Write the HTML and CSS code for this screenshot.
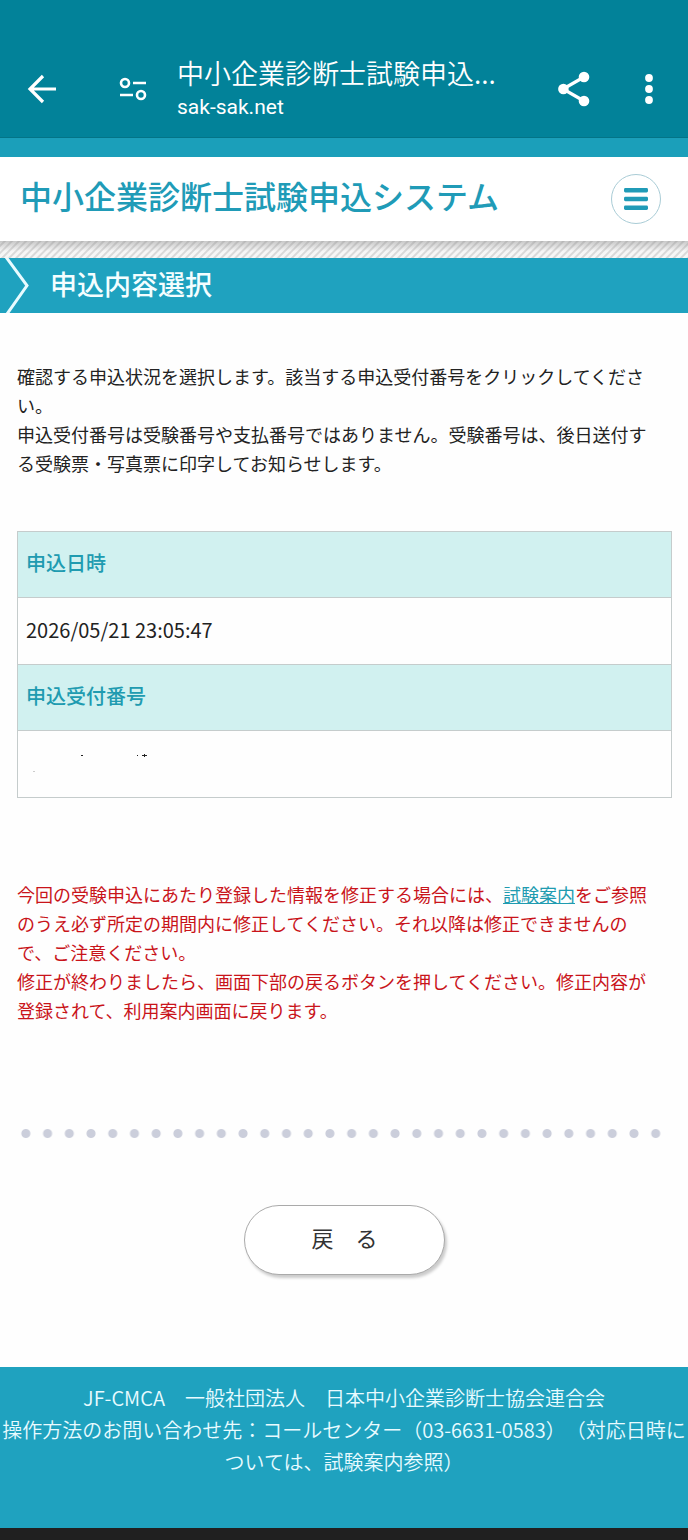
FILE: index.html
```html
<!DOCTYPE html>
<html lang="ja">
<head>
	<meta charset="UTF-8">
	<meta name="viewport" content="width=device-width, initial-scale=1.0">
	<title>中小企業診断士試験申込システム</title>
	<link rel="stylesheet" href="styles.css">
</head>
<body>

	<div class="browser-bar">
		<button type="button" class="bar-button" aria-label="戻る">
			<svg width="30" height="30" viewBox="0 0 30 30" fill="none" stroke="currentColor" stroke-width="3.2">
				<path d="M29 15H3M16 2L3 15l13 13"/>
			</svg>
		</button>
		<button type="button" class="bar-button bar-site" aria-label="サイト情報">
			<svg width="28" height="24" viewBox="0 0 28 24" fill="none" stroke="currentColor" stroke-width="2.6">
				<circle cx="6" cy="6" r="4"/>
				<path d="M14 6h13M1 18h13"/>
				<circle cx="22" cy="18" r="4"/>
			</svg>
		</button>
		<div class="bar-text">
			<div class="bar-title">中小企業診断士試験申込...</div>
			<div class="bar-url">sak-sak.net</div>
		</div>
		<button type="button" class="bar-button" aria-label="共有">
			<svg width="34" height="36" viewBox="0 0 34 36" fill="currentColor">
				<path d="M26 6L5 18l21 12" fill="none" stroke="currentColor" stroke-width="3.2"/>
				<circle cx="5.4" cy="18" r="5.3"/>
				<circle cx="26" cy="6" r="5.3"/>
				<circle cx="26" cy="30" r="5.3"/>
			</svg>
		</button>
		<button type="button" class="bar-button bar-more" aria-label="メニュー">
			<svg width="8" height="30" viewBox="0 0 8 30" fill="currentColor">
				<circle cx="4" cy="4" r="3.9"/>
				<circle cx="4" cy="15" r="3.9"/>
				<circle cx="4" cy="26" r="3.9"/>
			</svg>
		</button>
	</div>

	<header class="site-header">
		<h1 class="site-title">中小企業診断士試験申込システム</h1>
		<button type="button" class="menu-button" aria-label="メニューを開く">
			<svg width="24" height="22" viewBox="0 0 24 22" fill="currentColor">
				<rect y="0" width="24" height="4.4" rx="1.4"/>
				<rect y="8.8" width="24" height="4.4" rx="1.4"/>
				<rect y="17.6" width="24" height="4.4" rx="1.4"/>
			</svg>
		</button>
	</header>
	<div class="stripe"></div>

	<div class="page-heading">
		<svg class="chevron" width="30" height="55" viewBox="0 0 30 55" fill="none" stroke="#e8fbff" stroke-width="3">
			<path d="M6 -1L27 27.5L7 56"/>
		</svg>
		<h2>申込内容選択</h2>
	</div>

	<main>
		<p class="text">確認する申込状況を選択します。該当する申込受付番号をクリックしてください。<br>
		申込受付番号は受験番号や支払番号ではありません。受験番号は、後日送付する受験票・写真票に印字してお知らせします。</p>

		<table class="entry">
			<tr><th scope="row">申込日時</th></tr>
			<tr><td>2026/05/21 23:05:47</td></tr>
			<tr><th scope="row">申込受付番号</th></tr>
			<tr>
				<td>
					<svg class="masked" width="130" height="30" viewBox="0 0 130 30" fill="#222">
						<rect x="55" y="8" width="2" height="1"/>
						<rect x="111" y="8" width="1" height="1"/>
						<path d="M116 8h2v-1h1v1h2v1h-2v1h-1v-1h-2z"/>
						<rect x="7" y="24" width="2" height="1" fill="#ccc"/>
					</svg>
				</td>
			</tr>
		</table>

		<p class="text notice">今回の受験申込にあたり登録した情報を修正する場合には、<a href="#">試験案内</a>をご参照のうえ必ず所定の期間内に修正してください。それ以降は修正できませんので、ご注意ください。<br>
		修正が終わりましたら、画面下部の戻るボタンを押してください。修正内容が登録されて、利用案内画面に戻ります。</p>

		<hr class="dots">

		<button type="button" class="back-button">戻　る</button>
	</main>

	<footer class="site-footer">
		JF-CMCA　一般社団法人　日本中小企業診断士協会連合会<br>
		操作方法のお問い合わせ先：コールセンター（03-6631-0583）（対応日時については、試験案内参照）
	</footer>
	<div class="nav-area"></div>

</body>
</html>
```
FILE: styles.css
```css
* {
	box-sizing: border-box;
}
body {
	margin: 0;
	background-color: #fefefe;
	color: #222;
	font-family: "Noto Sans CJK JP", sans-serif;
	font-size: 18px;
	line-height: 29px;
	text-spacing-trim: space-all;
}
h1, h2, p {
	margin: 0;
}
button {
	padding: 0;
	font-family: inherit;
	cursor: pointer;
}
svg {
	display: block;
}

/* browser bar */
.browser-bar {
	display: flex;
	align-items: center;
	padding: 40px 35px 0 27px;
	height: 138px;
	background-color: #028299;
	border-bottom: 1px solid #037487;
	color: #fff;
}
.bar-button {
	border: none;
	background: none;
	color: inherit;
}
.bar-site {
	margin: 0 30px 0 62px;
}
.bar-text {
	flex: 1;
	min-width: 0;
}
.bar-title {
	font-size: 27px;
	font-weight: 350;
	line-height: 36px;
	white-space: nowrap;
}
.bar-url {
	font-family: Roboto, sans-serif;
	font-size: 21px;
	line-height: 32px;
}
.bar-more {
	margin-left: 53px;
}

/* header */
.site-header {
	display: flex;
	align-items: center;
	justify-content: space-between;
	padding: 17px 27px 17px 20px;
	border-top: 19px solid #1b9fba;
	background-color: #fff;
}
.site-title {
	padding-bottom: 8px;
	color: #209bb7;
	font-size: 32px;
	font-weight: 500;
	line-height: 42px;
}
.menu-button {
	display: flex;
	align-items: center;
	justify-content: center;
	width: 50px;
	height: 50px;
	border: 1px solid #a9ccd6;
	border-radius: 50%;
	background-color: #fff;
	color: #209bb7;
}
.stripe {
	height: 17px;
	background: linear-gradient(rgba(130, 130, 130, 0.4), rgba(255, 255, 255, 0) 60%), repeating-linear-gradient(135deg, #f6f6f6 0 2px, #d9d9d9 3px 4px, #f6f6f6 5px);
}
.page-heading {
	display: flex;
	align-items: center;
	height: 55px;
	background-color: #1fa2bf;
	color: #f4feff;
}
.page-heading h2 {
	margin-left: 20px;
	padding-bottom: 4px;
	font-size: 27px;
	font-weight: 500;
}

/* contents */
main {
	padding: 49px 16px 92px 17px;
}
.text {
	padding-right: 10px;
}
.entry {
	width: 100%;
	margin: 53px 0 82px;
	border-collapse: collapse;
	font-size: 20px;
}
.entry th,
.entry td {
	height: 66px;
	padding: 0 8px 4px;
	border: 1px solid #c5cccc;
	text-align: left;
}
.entry td {
	height: 67px;
}
.entry th {
	background-color: #d1f1f0;
	color: #209bb0;
	font-weight: 500;
}
.notice {
	color: #c9141a;
}
.notice a {
	color: #209bb0;
}
.dots {
	height: 9px;
	margin: 104px 5px 67px -2px;
	border: none;
	background: radial-gradient(circle, #cbcedb 4px, transparent 5px) left center / 22px 9px;
	background-repeat: round no-repeat;
}
.back-button {
	display: block;
	width: 201px;
	height: 70px;
	margin: 0 auto;
	padding-bottom: 6px;
	border: 1px solid #aaa;
	border-radius: 35px;
	background-color: #fff;
	box-shadow: 2px 3px 3px rgba(0, 0, 0, 0.2);
	color: #333;
	font-size: 22px;
}

/* footer */
.site-footer {
	padding: 15px 0 50px;
	background-color: #1fa2bf;
	color: #e8fbff;
	font-size: 20px;
	font-weight: 350;
	line-height: 32px;
	text-align: center;
}
.nav-area {
	height: 12px;
	background-color: #202020;
}
```
